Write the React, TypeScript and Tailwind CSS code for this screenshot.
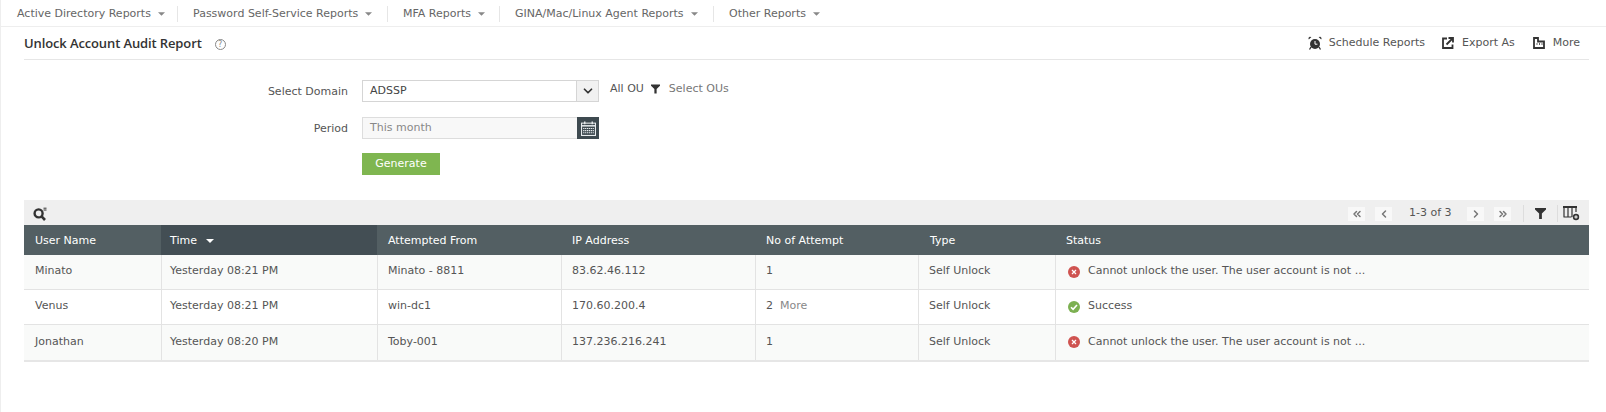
import { ChevronDown, ChevronLeft, ChevronRight, ChevronsLeft, ChevronsRight } from "lucide-react";

const navItems = [
  { label: "Active Directory Reports", width: "w-[176px]" },
  { label: "Password Self-Service Reports", width: "w-[210px]" },
  { label: "MFA Reports", width: "w-[112px]" },
  { label: "GINA/Mac/Linux Agent Reports", width: "w-[214px]" },
];

const columns = [
  { label: "User Name", className: "pl-[11px]" },
  { label: "Time", className: "pl-[9px] bg-[#434e54]" },
  { label: "Attempted From", className: "pl-[11px]" },
  { label: "IP Address", className: "pl-[11px]" },
  { label: "No of Attempt", className: "pl-[11px]" },
  { label: "Type", className: "pl-[12px]" },
  { label: "Status", className: "pl-[11px]" },
];

const rows = [
  { user: "Minato", time: "Yesterday 08:21 PM", from: "Minato - 8811", ip: "83.62.46.112", attempts: "1", more: false, ok: false, bg: "bg-[#f9faf9]" },
  { user: "Venus", time: "Yesterday 08:21 PM", from: "win-dc1", ip: "170.60.200.4", attempts: "2", more: true, ok: true, bg: "bg-white" },
  { user: "Jonathan", time: "Yesterday 08:20 PM", from: "Toby-001", ip: "137.236.216.241", attempts: "1", more: false, ok: false, bg: "bg-[#f9faf9]" },
];

function Caret({ className }: { className: string }) {
  return (
    <svg viewBox="0 0 8 4" className={className} fill="currentColor">
      <path d="M0 0h8L4 4z" />
    </svg>
  );
}

function Funnel({ className }: { className: string }) {
  return (
    <svg viewBox="0 0 12 12" className={className} fill="currentColor">
      <path d="M0 0h12v1.5L7.5 6v6h-3V6L0 1.5z" />
    </svg>
  );
}

function AlarmIcon() {
  return (
    <svg viewBox="0 0 14 14" className="w-[14px] h-[14px] text-[#333]" fill="currentColor">
      <circle cx="7" cy="8" r="5" />
      <path d="M0.8 3.4L3.4 1 1.6 0.8 0.4 2z" />
      <path d="M13.2 3.4L10.6 1l1.8-0.2L13.6 2z" />
      <path d="M3 11l-1.5 2.5M11 11l1.5 2.5" stroke="currentColor" strokeWidth="1.3" />
      <path d="M7 5v3.2h2.4" stroke="#fff" strokeWidth="1" fill="none" />
    </svg>
  );
}

function ExportIcon() {
  return (
    <svg viewBox="0 0 12 12" className="w-[12px] h-[12px] text-[#333]" fill="none" stroke="currentColor">
      <path d="M5 1.5H1v9.5h9.5V7.5" strokeWidth="1.8" />
      <path d="M4.5 7.5L10 2M6.5 1h4.5v4.5" strokeWidth="1.8" />
    </svg>
  );
}

function MoreIcon() {
  return (
    <svg viewBox="0 0 12 12" className="w-[12px] h-[12px] text-[#333]" fill="none" stroke="currentColor">
      <path d="M1 11V1h4v3.5h6V11z" strokeWidth="1.8" />
      <path d="M3.5 7h1M6 7h1M8.5 7h1" strokeWidth="1.5" />
    </svg>
  );
}

function CalendarIcon() {
  return (
    <svg viewBox="0 0 14 14" className="w-[15px] h-[15px]" fill="none" stroke="#e8ecee">
      <rect x="0.5" y="2" width="13" height="11.5" strokeWidth="1" />
      <path d="M0.5 4.5h13" strokeWidth="1.4" />
      <path d="M3.5 0.5v2.5M10.5 0.5v2.5" strokeWidth="1.3" />
      <path d="M2 7h10M2 9h10M2 11h10" strokeWidth="1" strokeDasharray="1.2 0.6" />
    </svg>
  );
}

function SearchIcon() {
  return (
    <svg viewBox="0 0 14 14" className="w-[14px] h-[14px] text-[#333]" fill="none" stroke="currentColor">
      <circle cx="5.6" cy="6.4" r="4" strokeWidth="2.4" />
      <path d="M8.6 9.4l3.4 3.6" strokeWidth="2.6" />
      <path d="M10.5 1.2h3M10.5 3h3" strokeWidth="1" />
    </svg>
  );
}

function ColumnsIcon() {
  return (
    <svg viewBox="0 0 17 15" className="w-[17px] h-[15px] text-[#333]" fill="none" stroke="currentColor">
      <path d="M0 1h14" strokeWidth="2" />
      <path d="M1 2v9M5 2v9M9 2v9M13 2v4M0.5 11h8" strokeWidth="1.2" />
      <circle cx="13" cy="11" r="3.2" fill="currentColor" stroke="none" />
      <path d="M11.3 11h3.4M13 9.3v3.4" stroke="#fff" strokeWidth="1" />
    </svg>
  );
}

function StatusIcon({ ok }: { ok: boolean }) {
  if (ok) {
    return (
      <svg viewBox="0 0 12 12" className="w-[12px] h-[12px] shrink-0">
        <circle cx="6" cy="6" r="6" fill="#7cb051" />
        <path d="M3 6.2l2.1 2.2L9 4" stroke="#fff" strokeWidth="1.6" fill="none" />
      </svg>
    );
  }
  return (
    <svg viewBox="0 0 12 12" className="w-[12px] h-[12px] shrink-0">
      <circle cx="6" cy="6" r="6" fill="#cf5350" />
      <path d="M4 4l4 4M8 4l-4 4" stroke="#fff" strokeWidth="1.2" />
    </svg>
  );
}

function PageButton({ children, className }: { children: React.ReactNode; className: string }) {
  return (
    <span className={`w-[17px] h-[14px] bg-[#f8f8f8] text-[#777] flex items-center justify-center ${className}`}>
      {children}
    </span>
  );
}

export default function App() {
  const grid = "grid grid-cols-[137px_216px_184px_194px_163px_137px_1fr]";
  const cell = "flex items-center pb-[1px] pl-[10px] border-l border-[#e3e3e3]";

  return (
    <div className="w-[1606px] h-[412px] overflow-hidden bg-white border-l border-[#eeeeee] font-['DejaVu_Sans',sans-serif] text-[11px] text-[#555]">
      {/* Top menu */}
      <nav className="h-[27px] pl-[16px] pt-[2px] flex items-center border-b border-[#eeeeee] text-[#666]">
        {navItems.map((item) => (
          <div key={item.label} className={`${item.width} flex items-center h-[16px]`}>
            <span>{item.label}</span>
            <Caret className="w-[7px] h-[4px] ml-[7px] text-[#888]" />
            <span className="ml-auto mr-[15px] h-[16px] w-px bg-[#e6e6e6]" />
          </div>
        ))}
        <div className="flex items-center">
          <span>Other Reports</span>
          <Caret className="w-[7px] h-[4px] ml-[7px] text-[#888]" />
        </div>
      </nav>

      {/* Title */}
      <div className="ml-[23px] mr-[17px] h-[33px] flex items-center border-b border-[#e6e6e6]">
        <h1 className="pt-[1px] text-[13px] tracking-[-0.12px] font-['Open_Sans',sans-serif] font-semibold text-[#333]">Unlock Account Audit Report</h1>
        <span className="ml-[13px] mt-[2px] w-[11px] h-[11px] rounded-full border border-[#888] text-[#888] text-[8px] leading-[9px] text-center">?</span>
        <div className="ml-auto flex items-center pr-[9px] text-[#555]">
          <AlarmIcon />
          <span className="ml-[7px]">Schedule Reports</span>
          <span className="ml-[17px]"><ExportIcon /></span>
          <span className="ml-[8px]">Export As</span>
          <span className="ml-[18px]"><MoreIcon /></span>
          <span className="ml-[8px]">More</span>
        </div>
      </div>

      {/* Filter form */}
      <div className="ml-[361px] mt-[20px] relative">
        <div className="flex h-[22px]">
          <label className="absolute right-full mr-[14px] top-[4px] whitespace-nowrap">Select Domain</label>
          <div className="w-[237px] h-[22px] flex border border-[#d5d5d5]">
            <span className="flex-1 pl-[7px] leading-[20px] text-[#444]">ADSSP</span>
            <span className="w-[22px] bg-[#f1f1f1] border-l border-[#d5d5d5] flex items-center justify-center">
              <ChevronDown className="w-[14px] h-[14px] text-[#333]" strokeWidth={3} />
            </span>
          </div>
          <div className="ml-[11px] flex items-start h-[17px] leading-[17px]">
            <span>All OU</span>
            <Funnel className="w-[9px] h-[10px] ml-[7px] mr-[9px] mt-[4px] text-[#333]" />
            <span className="text-[#777]">Select OUs</span>
          </div>
        </div>
        <div className="flex h-[22px] mt-[15px] relative">
          <label className="absolute right-full mr-[14px] top-[4px] whitespace-nowrap">Period</label>
          <div className="w-[237px] h-[22px] flex border border-[#dddddd] bg-[#f8f8f8]">
            <span className="flex-1 pl-[7px] leading-[20px] text-[#888]">This month</span>
            <span className="w-[22px] h-[22px] mt-[-1px] mr-[-1px] bg-[#3e4a50] flex items-center justify-center">
              <CalendarIcon />
            </span>
          </div>
        </div>
        <button className="block mt-[14px] w-[78px] h-[22px] bg-[#7fb650] text-white text-[11px]">Generate</button>
      </div>

      {/* Report table */}
      <div className="ml-[23px] mr-[17px] mt-[25px] border-b-2 border-[#e6e6e6]">
        <div className="h-[25px] bg-[#efefef] flex items-center pl-[9px] pt-[2px]">
          <SearchIcon />
          <div className="ml-auto flex items-center text-[#555]">
            <PageButton className=""><ChevronsLeft className="w-[12px] h-[12px]" strokeWidth={3} /></PageButton>
            <PageButton className="ml-[10px]"><ChevronLeft className="w-[12px] h-[12px]" strokeWidth={3} /></PageButton>
            <span className="ml-[17px] w-[58px]">1-3 of 3</span>
            <PageButton className=""><ChevronRight className="w-[12px] h-[12px]" strokeWidth={3} /></PageButton>
            <PageButton className="ml-[10px]"><ChevronsRight className="w-[12px] h-[12px]" strokeWidth={3} /></PageButton>
            <span className="ml-[12px] w-px h-[17px] bg-[#dddddd]" />
            <Funnel className="w-[11px] h-[11px] ml-[11px] text-[#333]" />
            <span className="ml-[11px] w-px h-[17px] bg-[#dddddd]" />
            <span className="ml-[5px] mr-[9px]"><ColumnsIcon /></span>
          </div>
        </div>
        <div className={`${grid} h-[30px] bg-[#535f63] text-white`}>
          {columns.map((col) => (
            <div key={col.label} className={`flex items-center pt-[2px] ${col.className}`}>
              {col.label}
              {col.label === "Time" && <Caret className="w-[8px] h-[4px] ml-[9px] text-white" />}
            </div>
          ))}
        </div>
        {rows.map((row) => (
          <div key={row.user} className={`${grid} h-[35px] ${row.bg} border-b border-[#e3e3e3] last:border-b-0`}>
            <div className="flex items-center pb-[1px] pl-[11px]">{row.user}</div>
            <div className="flex items-center pb-[1px] pl-[8px] border-l border-[#e3e3e3]">{row.time}</div>
            <div className={cell}>{row.from}</div>
            <div className={cell}>{row.ip}</div>
            <div className={cell}>
              {row.attempts}
              {row.more && <span className="ml-[7px] text-[#888]">More</span>}
            </div>
            <div className={cell}>Self Unlock</div>
            <div className="flex items-center pb-[1px] pl-[12px] border-l border-[#e3e3e3]">
              <StatusIcon ok={row.ok} />
              <span className="ml-[8px]">{row.ok ? "Success" : "Cannot unlock the user. The user account is not ..."}</span>
            </div>
          </div>
        ))}
      </div>
    </div>
  );
}
